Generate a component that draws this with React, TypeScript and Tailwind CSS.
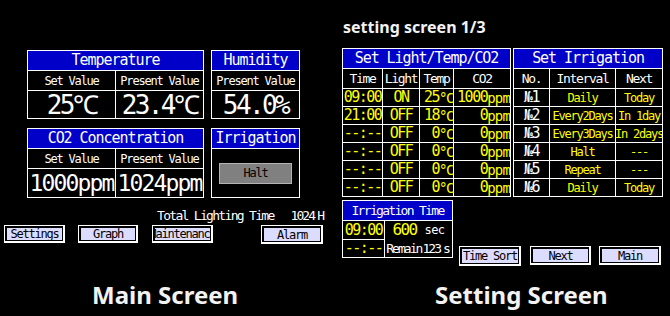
import type { ReactNode } from 'react';

const mono = "font-['DejaVu_Sans_Mono',monospace]";
const blue = 'bg-[#0000c8]';
const cell = `bg-black flex items-center leading-none whitespace-nowrap overflow-hidden ${mono}`;

function MainPanel({ title, className, children }: { title: string; className: string; children: ReactNode }) {
  return (
    <div className={`border border-white flex flex-col ${className}`}>
      <div className={`h-[20px] shrink-0 ${blue} border-b border-white flex items-center justify-center text-[15px] leading-none tracking-[-0.07em] ${mono}`}>
        {title}
      </div>
      {children}
    </div>
  );
}

function SubRow({ labels }: { labels: string[] }) {
  return (
    <div className={`h-[20px] shrink-0 flex border-b border-white text-[12px] leading-none tracking-[-0.1em] ${mono}`}>
      {labels.map((l, i) => (
        <div
          key={l + i}
          className={`flex items-center justify-center ${i === 0 && labels.length > 1 ? 'w-[88px] border-r border-white' : 'flex-1'}`}
        >
          {l}
        </div>
      ))}
    </div>
  );
}

function Btn({ label, className }: { label: string; className: string }) {
  return (
    <div className={`shrink-0 border border-white border-r-2 border-b-2 ${className}`}>
      <div className={`h-full w-full border-black border-l-2 border-t-2 border-r border-b bg-[#dcdcff] flex items-center justify-center overflow-hidden whitespace-nowrap text-black text-[12px] leading-none tracking-[-0.1em] ${mono}`}>
        {label}
      </div>
    </div>
  );
}

function MainScreen() {
  return (
    <div className="w-[335px] shrink-0 flex flex-col">
      <div className="pl-[27px] pt-[50px] flex flex-col gap-[9px]">
        <div className="flex gap-[7px]">
          <MainPanel title="Temperature" className="w-[177px] h-[69px]">
            <SubRow labels={['Set Value', 'Present Value']} />
            <div className={`flex-1 flex text-[26px] leading-none tracking-[-0.1em] ${mono}`}>
              <div className="w-[88px] border-r border-white flex items-center justify-center">25℃</div>
              <div className="flex-1 flex items-center justify-center">23.4℃</div>
            </div>
          </MainPanel>
          <MainPanel title="Humidity" className="w-[89px] h-[69px]">
            <SubRow labels={['Present Value']} />
            <div className={`flex-1 flex items-center justify-center text-[26px] leading-none tracking-[-0.1em] ${mono}`}>
              54.0%
            </div>
          </MainPanel>
        </div>
        <div className="flex gap-[7px]">
          <MainPanel title="CO2 Concentration" className="w-[177px] h-[70px]">
            <SubRow labels={['Set Value', 'Present Value']} />
            <div className={`flex-1 flex text-[23px] leading-none tracking-[-0.08em] ${mono}`}>
              <div className="w-[88px] border-r border-white flex items-center justify-center">1000ppm</div>
              <div className="flex-1 flex items-center justify-center">1024ppm</div>
            </div>
          </MainPanel>
          <MainPanel title="Irrigation" className="w-[89px] h-[70px]">
            <div className="flex-1 flex items-center justify-center">
              <div className={`w-[73px] h-[21px] bg-[#808080] border border-[#b4b4b4] flex items-center justify-center text-black text-[12px] leading-none tracking-[-0.1em] ${mono}`}>
                Halt
              </div>
            </div>
          </MainPanel>
        </div>
      </div>

      <div className={`mt-[11px] pl-[157px] h-[13px] flex items-center text-[13px] leading-none ${mono}`}>
        <span className="tracking-[-0.13em]">Total Lighting Time</span>
        <span className="ml-[17px] tracking-[-0.15em]">1024</span>
        <span className="ml-[3px]">H</span>
      </div>

      <div className="mt-[3px] pl-[4px] flex items-start">
        <Btn label="Settings" className="w-[61px] h-[18px]" />
        <Btn label="Graph" className="ml-[13px] w-[60px] h-[18px]" />
        <Btn label="Maintenance" className="ml-[14px] w-[61px] h-[18px]" />
        <Btn label="Alarm" className="ml-[48px] w-[62px] h-[19px]" />
      </div>
    </div>
  );
}

const lightRows = [
  { time: '09:00', light: 'ON', temp: '25', co2: '1000' },
  { time: '21:00', light: 'OFF', temp: '18', co2: '0' },
  { time: '--:--', light: 'OFF', temp: '0', co2: '0' },
  { time: '--:--', light: 'OFF', temp: '0', co2: '0' },
  { time: '--:--', light: 'OFF', temp: '0', co2: '0' },
  { time: '--:--', light: 'OFF', temp: '0', co2: '0' },
];

const irrigationRows = [
  { no: '№1', interval: 'Daily', next: 'Today' },
  { no: '№2', interval: 'Every2Days', next: 'In 1day' },
  { no: '№3', interval: 'Every3Days', next: 'In 2days' },
  { no: '№4', interval: 'Halt', next: '---' },
  { no: '№5', interval: 'Repeat', next: '---' },
  { no: '№6', interval: 'Daily', next: 'Today' },
];

function SettingScreen() {
  const head = `${blue} flex items-center justify-center text-[15px] leading-none tracking-[-0.07em] ${mono}`;
  const sub = `${cell} justify-center text-[13px] tracking-[-0.1em]`;
  const yellow = 'text-[#ffff00]';

  return (
    <div className="flex-1 flex flex-col pl-[7px]">
      <div className="h-[48px] pt-[19px] pl-[1px] font-['Noto_Sans',sans-serif] font-bold text-[16px] leading-none text-[#f2f2f2]">
        setting screen 1/3
      </div>

      <div className="flex items-start gap-[2px]">
        <div className="grid grid-cols-[39px_36px_33px_56px] grid-rows-[19px_19px_repeat(6,17px)] gap-px p-px bg-white">
          <div className={`col-span-4 ${head}`}>Set Light/Temp/CO2</div>
          <div className={sub}>Time</div>
          <div className={sub}>Light</div>
          <div className={sub}>Temp</div>
          <div className={sub}>CO2</div>
          {lightRows.map((r, i) => (
            <div key={i} className="contents">
              <div className={`${cell} justify-center ${yellow} text-[15px] tracking-[-0.1em]`}>{r.time}</div>
              <div className={`${cell} justify-center ${yellow} text-[15px] tracking-[-0.1em]`}>{r.light}</div>
              <div className={`${cell} justify-end ${yellow}`}>
                <span className="text-[15px] tracking-[-0.1em]">{r.temp}</span>
                <span className="text-[14px] tracking-[-0.1em]">°C</span>
              </div>
              <div className={`${cell} justify-end ${yellow}`}>
                <span className="text-[15px] tracking-[-0.1em]">{r.co2}</span>
                <span className="text-[14px] tracking-[-0.06em]">ppm</span>
              </div>
            </div>
          ))}
        </div>

        <div className="grid grid-cols-[35px_65px_46px] grid-rows-[19px_19px_repeat(6,17px)] gap-px p-px bg-white">
          <div className={`col-span-3 ${head}`}>Set Irrigation</div>
          <div className={sub}>No.</div>
          <div className={sub}>Interval</div>
          <div className={sub}>Next</div>
          {irrigationRows.map((r) => (
            <div key={r.no} className="contents">
              <div className={`${cell} justify-center text-[15px] tracking-[-0.1em]`}>{r.no}</div>
              <div className={`${cell} justify-center ${yellow} text-[12px] tracking-[-0.1em]`}>{r.interval}</div>
              <div className={`${cell} justify-center ${yellow} text-[12px] tracking-[-0.1em]`}>{r.next}</div>
            </div>
          ))}
        </div>
      </div>

      <div className="mt-[3px] flex items-start">
        <div className="grid grid-cols-[41px_67px] grid-rows-[19px_18px_17px] gap-px p-px bg-white">
          <div className={`col-span-2 ${blue} flex items-center justify-center text-[13px] leading-none tracking-[-0.13em] ${mono}`}>
            Irrigation Time
          </div>
          <div className={`${cell} justify-center ${yellow} text-[15px] tracking-[-0.1em]`}>09:00</div>
          <div className={`row-span-2 bg-black flex flex-col leading-none whitespace-nowrap ${mono}`}>
            <div className="h-[18px] flex items-center justify-center">
              <span className={`${yellow} text-[16px] tracking-[-0.1em]`}>600</span>
              <span className="ml-[8px] text-[12px] tracking-[-0.05em]">sec</span>
            </div>
            <div className="flex-1 flex items-center justify-center">
              <span className="text-[13px] tracking-[-0.15em]">Remain</span>
              <span className="ml-px text-[13px] tracking-[-0.15em]">123</span>
              <span className="ml-[3px] text-[13px]">s</span>
            </div>
          </div>
          <div className={`${cell} justify-center ${yellow} text-[15px] tracking-[-0.1em]`}>--:--</div>
        </div>

        <Btn label="Time Sort" className="mt-[46px] ml-[6px] w-[62px] h-[20px]" />
        <Btn label="Next" className="mt-[46px] ml-[9px] w-[61px] h-[19px]" />
        <Btn label="Main" className="mt-[46px] ml-[8px] w-[62px] h-[19px]" />
      </div>
    </div>
  );
}

export default function App() {
  return (
    <div className="w-[670px] h-[316px] bg-black text-white flex flex-col overflow-hidden">
      <div className="flex h-[283px]">
        <MainScreen />
        <SettingScreen />
      </div>
      <div className="flex font-['Noto_Sans',sans-serif] font-bold text-[24px] leading-none text-[#f2f2f2]">
        <div className="w-[335px] shrink-0 pl-[92px]">Main Screen</div>
        <div className="pl-[100px]">Setting Screen</div>
      </div>
    </div>
  );
}
